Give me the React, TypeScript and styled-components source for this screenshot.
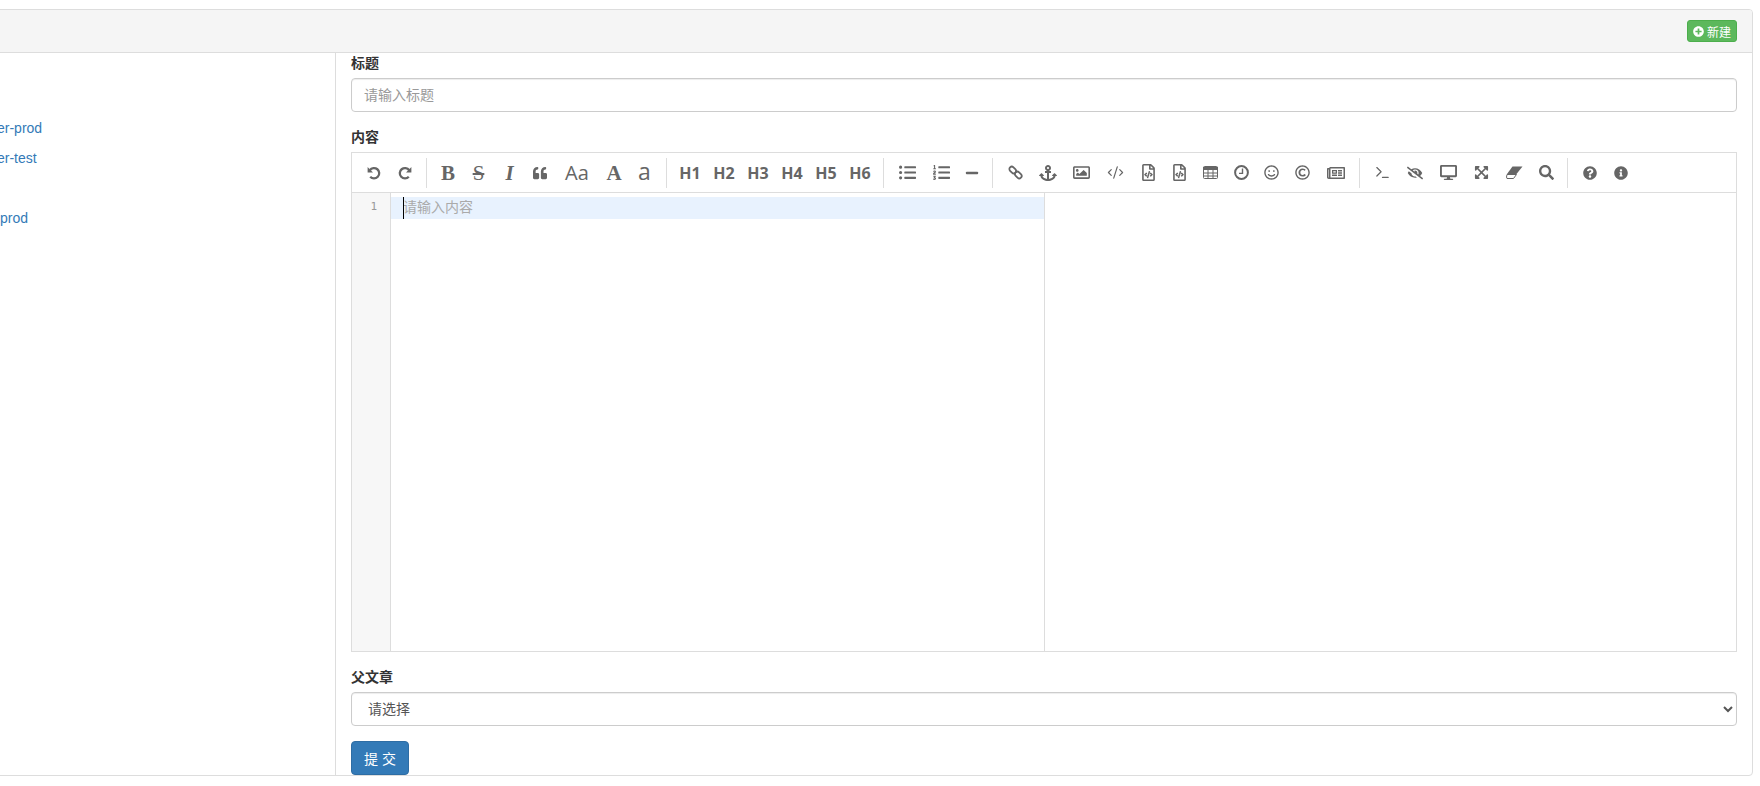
import React from "react";
import styled, { createGlobalStyle } from "styled-components";
import {
  FaQuoteLeft,
  FaListUl,
  FaListOl,
  FaMinus,
  FaAnchor,
  FaRegImage,
  FaRegFileCode,
  FaRegSmile,
  FaRegCopyright,
  FaRegNewspaper,
  FaEyeSlash,
  FaDesktop,
  FaExpandArrowsAlt,
  FaSearch,
  FaQuestionCircle,
  FaInfoCircle,
  FaPlusCircle,
} from "react-icons/fa";
import { CodeXml, Terminal } from "lucide-react";

const GlobalStyle = createGlobalStyle`
  html, body {
    margin: 0;
    padding: 0;
    height: 786px;
    overflow: hidden;
    background: #fff;
    font-family: "Liberation Sans", "Noto Sans CJK SC", sans-serif;
    font-size: 14px;
    color: #333;
  }
  * {
    box-sizing: border-box;
  }
`;

const Page = styled.div`
  padding-top: 9px;
  padding-right: 7px;
`;

const Panel = styled.div`
  margin-left: -4px;
  height: 767px;
  border: 1px solid #ddd;
  border-radius: 4px;
  overflow: hidden;
`;

const PanelHeading = styled.div`
  height: 43px;
  padding-top: 10px;
  padding-right: 15px;
  display: flex;
  justify-content: flex-end;
  background: #f5f5f5;
  border-bottom: 1px solid #ddd;
`;

const NewButton = styled.button`
  width: 50px;
  height: 22px;
  padding: 0;
  display: flex;
  align-items: center;
  justify-content: center;
  gap: 3px;
  border: 1px solid #4cae4c;
  border-radius: 3px;
  background: #5cb85c;
  color: #fff;
  font: 12px "Liberation Sans", "Noto Sans CJK SC", sans-serif;
`;

const PanelBody = styled.div`
  display: flex;
  height: 723px;
`;

const Sidebar = styled.ul`
  width: 339px;
  margin: 0;
  padding: 30px 0 0;
  list-style: none;
  flex: none;
  overflow: hidden;
  border-right: 1px solid #ddd;
`;

const SideItem = styled.li<{ $shift?: number }>`
  height: 30px;
  line-height: 30px;
  padding-left: ${(p) => 3 - (p.$shift ?? 0)}px;
  color: #337ab7;
  font-size: 14px;
`;

const Form = styled.form`
  flex: 1;
  min-width: 0;
  padding: 0 15px;
`;

const Label = styled.label`
  display: block;
  height: 20px;
  line-height: 20px;
  margin-bottom: 5px;
  font-weight: 700;
  font-size: 14px;
  color: #333;
`;

const TextInput = styled.input`
  display: block;
  width: 100%;
  height: 34px;
  padding: 6px 12px;
  border: 1px solid #ccc;
  border-radius: 4px;
  box-shadow: inset 0 1px 1px rgba(0, 0, 0, 0.075);
  font: 14px "Liberation Sans", "Noto Sans CJK SC", sans-serif;
  color: #555;
  &::placeholder {
    color: #999;
  }
`;

const Field = styled.div`
  margin-bottom: 15px;
`;

const Editor = styled.div`
  height: 500px;
  margin-bottom: 15px;
  border: 1px solid #ddd;
  display: flex;
  flex-direction: column;
`;

const Toolbar = styled.div`
  height: 40px;
  flex: none;
  display: flex;
  align-items: center;
  padding: 0 7px;
  border-bottom: 1px solid #ddd;
  color: #666;
`;

const ToolButton = styled.span<{ $w?: number }>`
  width: ${(p) => p.$w ?? 30}px;
  height: 30px;
  flex: none;
  display: flex;
  align-items: center;
  justify-content: center;
  font-size: 15px;
`;

const Heading = styled(ToolButton)`
  width: 34px;
  font: 700 16px "Open Sans", sans-serif;
`;

const Divider = styled.span`
  width: 1px;
  height: 30px;
  flex: none;
  margin: 0 6px;
  background: #ddd;
`;

const EditorBody = styled.div`
  flex: 1;
  min-height: 0;
  display: flex;
`;

const Gutter = styled.div`
  width: 39px;
  flex: none;
  padding-top: 4px;
  padding-right: 13px;
  background: #f7f7f7;
  border-right: 1px solid #ddd;
  text-align: right;
  font: 11px/20px "DejaVu Sans Mono", monospace;
  color: #999;
`;

const CodePane = styled.div`
  width: 654px;
  flex: none;
  padding-top: 4px;
  border-right: 1px solid #ddd;
`;

const ActiveLine = styled.div`
  position: relative;
  height: 22px;
  padding-left: 12px;
  background: #e8f2fe;
  line-height: 21px;
  font-size: 14px;
  color: #aaa;
  &::before {
    content: "";
    position: absolute;
    left: 12px;
    top: 0;
    width: 1px;
    height: 22px;
    background: #000;
  }
`;

const Select = styled.select`
  display: block;
  width: 100%;
  height: 34px;
  padding: 6px 12px;
  border: 1px solid #ccc;
  border-radius: 4px;
  background: #fff;
  box-shadow: inset 0 1px 1px rgba(0, 0, 0, 0.075);
  font: 14px "Liberation Sans", "Noto Sans CJK SC", sans-serif;
  color: #555;
`;

const Submit = styled.button`
  width: 58px;
  height: 34px;
  padding: 0;
  display: block;
  border: 1px solid #2e6da4;
  border-radius: 4px;
  background: #337ab7;
  color: #fff;
  font: 14px "Liberation Sans", "Noto Sans CJK SC", sans-serif;
`;

const SerifGlyph = styled.span<{ $italic?: boolean; $strike?: boolean }>`
  font-family: "Liberation Serif", serif;
  font-size: 21px;
  line-height: 30px;
  font-weight: ${(p) => (p.$strike ? 400 : 700)};
  font-style: ${(p) => (p.$italic ? "italic" : "normal")};
  text-decoration: ${(p) => (p.$strike ? "line-through" : "none")};
`;

const LetterAa = styled.span`
  font: 20px "Open Sans", sans-serif;
`;

const SmallA = styled.span`
  font: 23px/30px "Open Sans", sans-serif;
  margin-top: -4px;
`;

const Mirrored = styled.span`
  display: flex;
  transform: scaleX(-1);
`;

const UndoIcon = () => (
  <svg width="14" height="14" viewBox="0 0 14 14">
    <path d="M.6 1V6.4H6Z" fill="currentColor" />
    <path d="M2.8 4.2A5.2 5.2 0 1 1 3.2 10.8" fill="none" stroke="currentColor" strokeWidth="2.3" />
  </svg>
);

const ChainIcon = () => (
  <svg width="15" height="15" viewBox="0 0 15 15" fill="none" stroke="currentColor" strokeWidth="1.8">
    <rect x="1" y="2.6" width="7.4" height="4.8" rx="2.4" transform="rotate(45 4.7 5)" />
    <rect x="6.6" y="7.6" width="7.4" height="4.8" rx="2.4" transform="rotate(45 10.3 10)" />
  </svg>
);

const TableIcon = () => (
  <svg width="15" height="13" viewBox="0 0 15 13" fill="none" stroke="currentColor" strokeWidth="1">
    <rect x="0.5" y="0.5" width="14" height="12" rx="1" />
    <path d="M0 2.5H15" strokeWidth="3" />
    <path d="M0 7H15M0 10H15M5 3V13M10 3V13" />
  </svg>
);

const ClockIcon = () => (
  <svg width="15" height="15" viewBox="0 0 15 15" fill="none" stroke="currentColor">
    <circle cx="7.5" cy="7.5" r="6.4" strokeWidth="2" />
    <path d="M8.5 3.5V8.4H5" strokeWidth="1.4" />
  </svg>
);

const EraserIcon = () => (
  <svg width="17" height="13" viewBox="0 0 17 13">
    <path d="M6.5 .5H16.5L10.5 8H1Z" fill="currentColor" />
    <path d="M1 8.5H10.5L7.5 12.5H1L.5 11Z" fill="none" stroke="currentColor" />
  </svg>
);

const App = () => {
  return (
    <Page>
      <GlobalStyle />
      <Panel>
        <PanelHeading>
          <NewButton type="button">
            <FaPlusCircle size={11} />
            新建
          </NewButton>
        </PanelHeading>
        <PanelBody>
          <Sidebar>
            <SideItem>&nbsp;</SideItem>
            <SideItem $shift={6}>er-prod</SideItem>
            <SideItem $shift={5}>er-test</SideItem>
            <SideItem>&nbsp;</SideItem>
            <SideItem>prod</SideItem>
          </Sidebar>
          <Form>
            <Field>
              <Label>标题</Label>
              <TextInput placeholder="请输入标题" />
            </Field>
            <Label>内容</Label>
            <Editor>
              <Toolbar>
                <ToolButton><UndoIcon /></ToolButton>
                <ToolButton $w={31}><Mirrored><UndoIcon /></Mirrored></ToolButton>
                <Divider />
                <ToolButton><SerifGlyph>B</SerifGlyph></ToolButton>
                <ToolButton $w={31}><SerifGlyph $strike>S</SerifGlyph></ToolButton>
                <ToolButton $w={31}><SerifGlyph $italic>I</SerifGlyph></ToolButton>
                <ToolButton><FaQuoteLeft size={14} /></ToolButton>
                <ToolButton $w={44}><LetterAa>Aa</LetterAa></ToolButton>
                <ToolButton><SerifGlyph>A</SerifGlyph></ToolButton>
                <ToolButton $w={31}><SmallA>a</SmallA></ToolButton>
                <Divider />
                <Heading>H1</Heading>
                <Heading>H2</Heading>
                <Heading>H3</Heading>
                <Heading>H4</Heading>
                <Heading>H5</Heading>
                <Heading>H6</Heading>
                <Divider />
                <ToolButton $w={34}><FaListUl size={17} /></ToolButton>
                <ToolButton $w={34}><FaListOl size={17} /></ToolButton>
                <ToolButton $w={28}><FaMinus size={14} /></ToolButton>
                <Divider />
                <ToolButton $w={32}><ChainIcon /></ToolButton>
                <ToolButton $w={34}><FaAnchor size={18} /></ToolButton>
                <ToolButton $w={32}><FaRegImage size={17} /></ToolButton>
                <ToolButton $w={36}><CodeXml size={17} strokeWidth={1.7} /></ToolButton>
                <ToolButton><FaRegFileCode size={17} /></ToolButton>
                <ToolButton $w={32}><FaRegFileCode size={17} /></ToolButton>
                <ToolButton><TableIcon /></ToolButton>
                <ToolButton $w={32}><ClockIcon /></ToolButton>
                <ToolButton $w={28}><FaRegSmile size={15} /></ToolButton>
                <ToolButton $w={34}><FaRegCopyright size={15} /></ToolButton>
                <ToolButton $w={34}><FaRegNewspaper size={18} /></ToolButton>
                <Divider />
                <ToolButton $w={32}><Terminal size={17} strokeWidth={1.7} /></ToolButton>
                <ToolButton $w={34}><FaEyeSlash size={16} /></ToolButton>
                <ToolButton $w={32}><FaDesktop size={17} /></ToolButton>
                <ToolButton $w={34}><FaExpandArrowsAlt size={15} /></ToolButton>
                <ToolButton $w={33}><EraserIcon /></ToolButton>
                <ToolButton $w={30}><FaSearch size={15} /></ToolButton>
                <Divider />
                <ToolButton $w={32}><FaQuestionCircle size={14} /></ToolButton>
                <ToolButton><FaInfoCircle size={14} /></ToolButton>
              </Toolbar>
              <EditorBody>
                <Gutter>1</Gutter>
                <CodePane>
                  <ActiveLine>请输入内容</ActiveLine>
                </CodePane>
              </EditorBody>
            </Editor>
            <Field>
              <Label>父文章</Label>
              <Select defaultValue="">
                <option value="">请选择</option>
              </Select>
            </Field>
            <Submit type="button">提 交</Submit>
          </Form>
        </PanelBody>
      </Panel>
    </Page>
  );
};

export default App;
